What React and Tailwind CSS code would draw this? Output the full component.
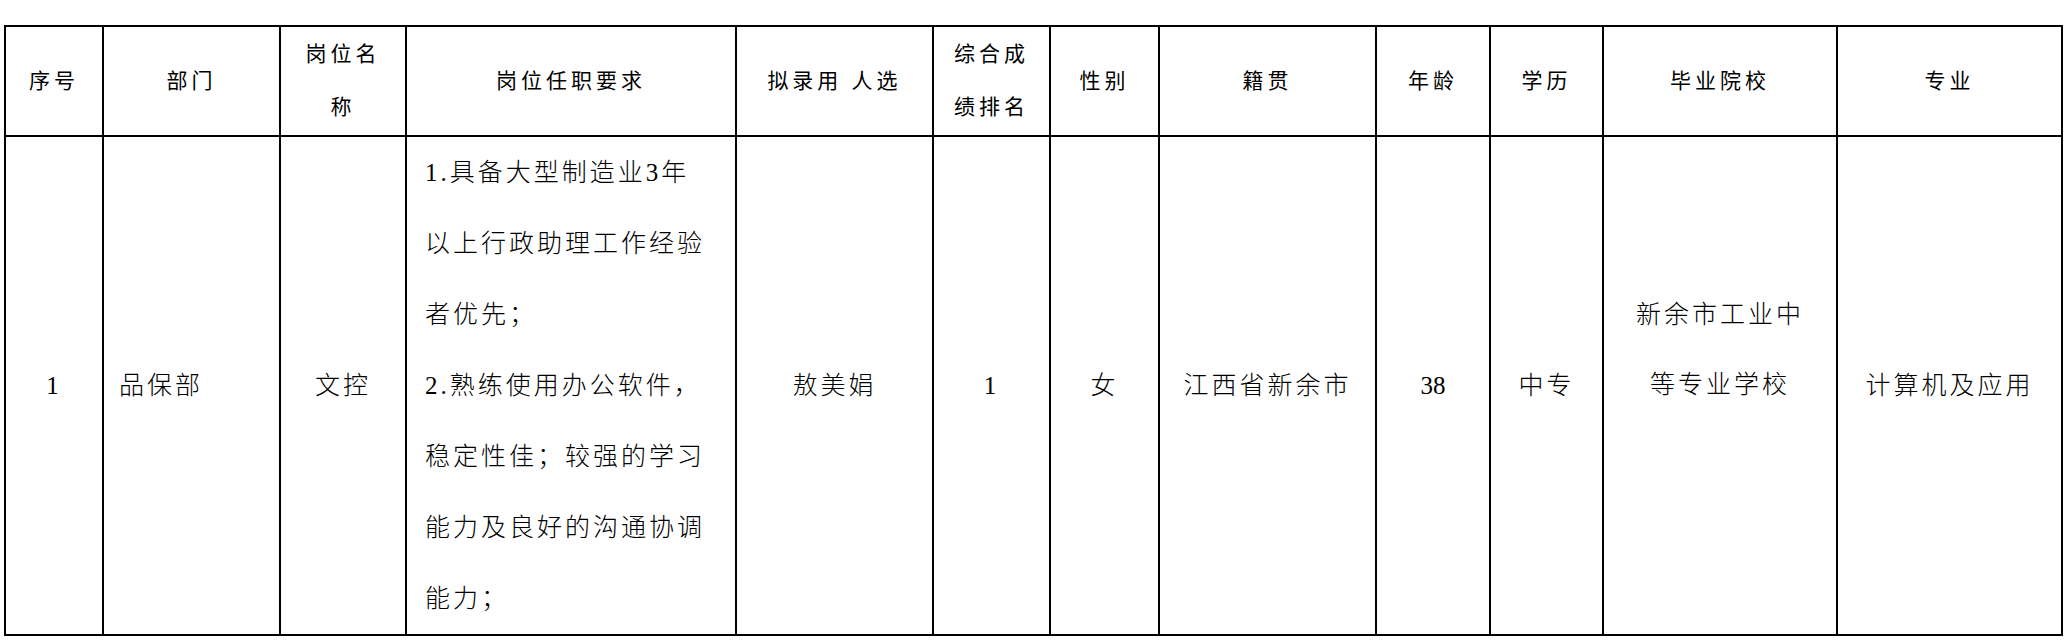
const headers = [
  { w: "w-[98px]", label: ["序号"] },
  { w: "w-[177px]", label: ["部门"] },
  { w: "w-[126px]", label: ["岗位名", "称"] },
  { w: "w-[330px]", label: ["岗位任职要求"] },
  { w: "w-[197px]", label: ["拟录用 人选"] },
  { w: "w-[117px]", label: ["综合成", "绩排名"] },
  { w: "w-[109px]", label: ["性别"] },
  { w: "w-[217px]", label: ["籍贯"] },
  { w: "w-[114px]", label: ["年龄"] },
  { w: "w-[113px]", label: ["学历"] },
  { w: "w-[234px]", label: ["毕业院校"] },
  { w: "w-[225px]", label: ["专业"] },
];

const requirements = [
  "1.具备大型制造业3年",
  "以上行政助理工作经验",
  "者优先；",
  "2.熟练使用办公软件，",
  "稳定性佳；较强的学习",
  "能力及良好的沟通协调",
  "能力；",
];

const font = {
  fontFamily: '"Liberation Serif", "Noto Sans CJK SC", serif',
};

const Cell = ({ children, className = "" }) => (
  <td
    className={`border-2 border-black p-0 align-middle text-[25px] leading-[71px] tracking-[3px] font-light text-black ${className}`}
  >
    {children}
  </td>
);

const App = () => {
  return (
    <div className="min-h-screen bg-white pt-[25px] pl-[4px]" style={font}>
      <table className="table-fixed border-collapse w-[2058px]">
        <colgroup>
          {headers.map((h, i) => (
            <col key={i} className={h.w} />
          ))}
        </colgroup>
        <thead>
          <tr className="h-[110px]">
            {headers.map((h, i) => (
              <th
                key={i}
                className="border-2 border-black p-0 align-middle text-center text-[21px] leading-[53px] tracking-[4px] font-normal text-black"
              >
                {h.label.map((l, j) => (
                  <div key={j} className="whitespace-pre">
                    {l}
                  </div>
                ))}
              </th>
            ))}
          </tr>
        </thead>
        <tbody>
          <tr className="h-[498px]">
            <Cell className="text-center">1</Cell>
            <Cell className="pl-[15px] text-left">品保部</Cell>
            <Cell className="text-center">文控</Cell>
            <Cell className="pl-[18px] text-left align-top">
              {requirements.map((r, i) => (
                <div key={i} className="whitespace-nowrap">
                  {r}
                </div>
              ))}
            </Cell>
            <Cell className="text-center">敖美娟</Cell>
            <Cell className="text-center">1</Cell>
            <Cell className="text-center">女</Cell>
            <Cell className="text-center">江西省新余市</Cell>
            <Cell className="text-center tracking-normal">38</Cell>
            <Cell className="text-center">中专</Cell>
            <Cell className="text-center">
              <div className="pb-[71px] leading-[70px]">
                <div>新余市工业中</div>
                <div>等专业学校</div>
              </div>
            </Cell>
            <Cell className="text-center">计算机及应用</Cell>
          </tr>
        </tbody>
      </table>
    </div>
  );
};

export default App;
